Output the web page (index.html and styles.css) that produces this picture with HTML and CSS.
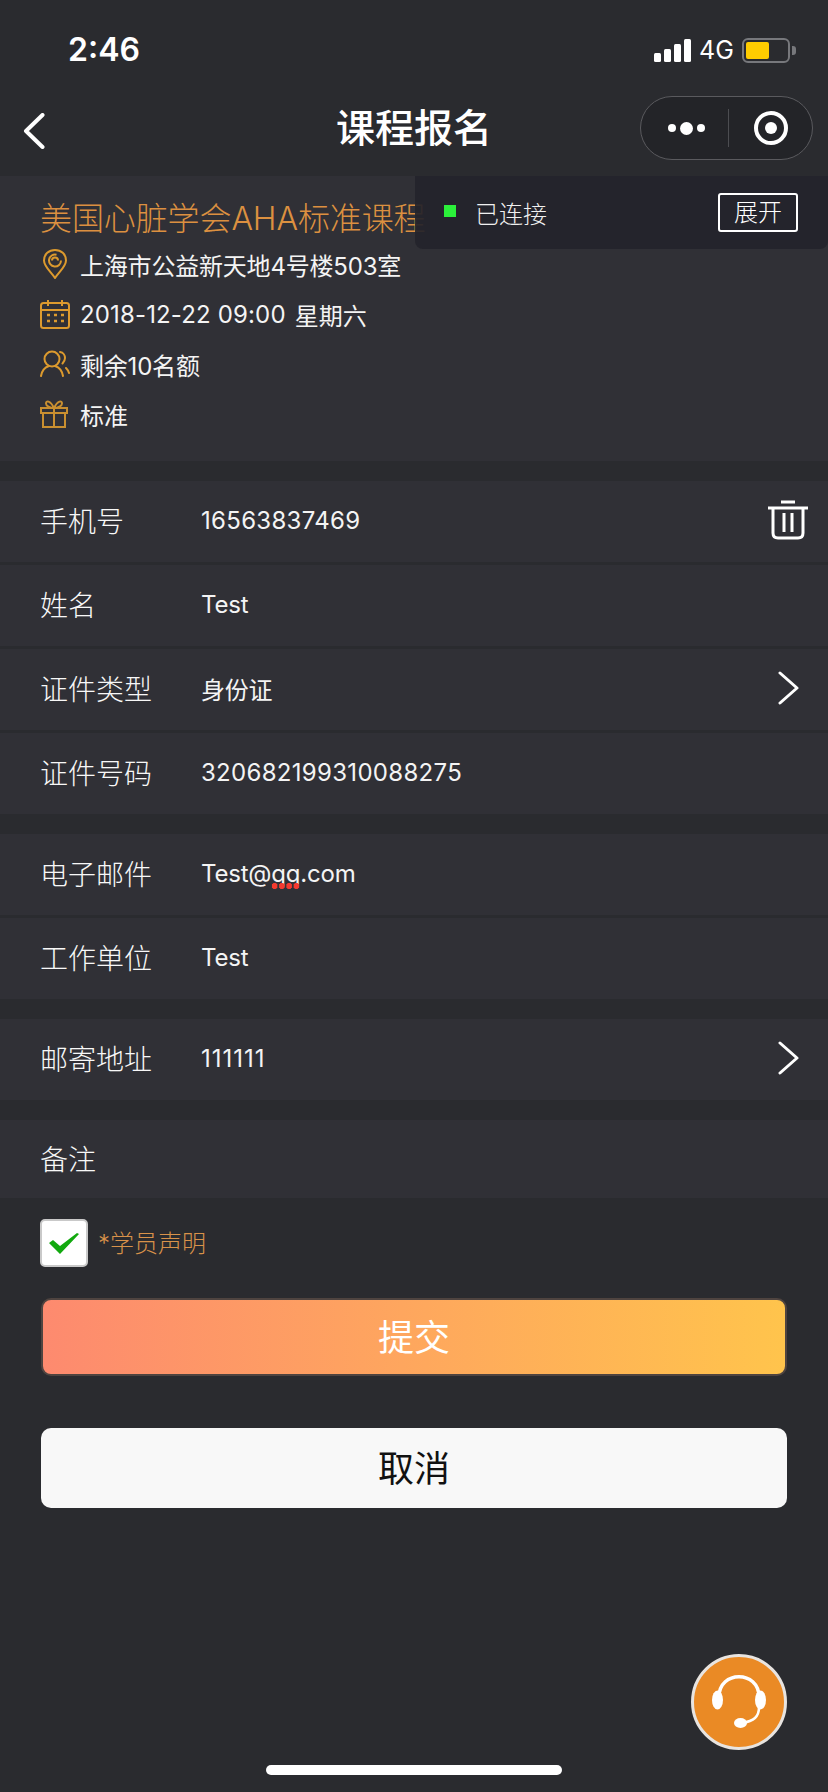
FILE: index.html
```html
<!DOCTYPE html>
<html lang="zh-CN">
<head>
    <meta charset="UTF-8">
    <meta name="viewport" content="width=device-width, initial-scale=1.0">
    <title>课程报名</title>
    <link rel="stylesheet" href="styles.css">
</head>
<body>
    <div class="page">
        <!-- Status bar -->
        <div class="status-bar">
            <span class="time">2:46</span>
            <div class="status-right">
                <div class="signal"><i class="b1"></i><i class="b2"></i><i class="b3"></i><i class="b4"></i></div>
                <span class="net">4G</span>
                <div class="battery"><div class="battery-fill"></div></div>
                <div class="battery-nub"></div>
            </div>
        </div>

        <!-- Nav -->
        <div class="nav">
            <svg class="back" viewBox="0 0 22 36" width="22" height="36"><path d="M19.500 2 L3 18 L19.500 34" fill="none" stroke="#fff" stroke-width="4" stroke-linecap="round" stroke-linejoin="round"/></svg>
            <h1 class="nav-title">课程报名</h1>
            <div class="capsule">
                <div class="capsule-dots"><i></i><i class="big"></i><i></i></div>
                <div class="capsule-line"></div>
                <svg class="capsule-target" viewBox="0 0 34 34" width="34" height="34"><circle cx="17" cy="17" r="15" fill="none" stroke="#fff" stroke-width="4"/><circle cx="17" cy="17" r="6" fill="#fff"/></svg>
            </div>
        </div>

        <!-- Course info -->
        <div class="course">
            <div class="course-title">美国心脏学会AHA标准课程</div>
            <div class="info-row">
                <svg class="info-icon" viewBox="0 0 30 30" width="30" height="30"><path d="M15 29 C11 23 4 17.500 4 11.500 C4 5 9 1 15 1 C21 1 26 5 26 11.500 C26 17.500 19 23 15 29 Z" fill="none" stroke="#dc9a2e" stroke-width="2"/><path d="M21 11.500 A6 6 0 1 1 16.500 5.700" fill="none" stroke="#dc9a2e" stroke-width="2"/><path d="M12 11.500 A3 3 0 0 1 18 11.500" fill="none" stroke="#dc9a2e" stroke-width="2"/></svg>
                <span class="tight">上海市公益新天地4号楼503室</span>
            </div>
            <div class="info-row">
                <svg class="info-icon" viewBox="0 0 30 30" width="30" height="30"><rect x="1" y="4" width="28" height="25" rx="2.500" fill="none" stroke="#dc9a2e" stroke-width="2"/><path d="M1 11 H29 M8 1 V7 M22 1 V7" fill="none" stroke="#dc9a2e" stroke-width="2"/><path d="M7 16 h3 M14 16 h3 M21 16 h3 M7 22 h3 M14 22 h3 M21 22 h3" stroke="#dc9a2e" stroke-width="2.500"/></svg>
                <span class="info-date">2018-12-22 09:00</span><span class="info-week">星期六</span>
            </div>
            <div class="info-row">
                <svg class="info-icon" viewBox="0 0 30 30" width="30" height="30"><circle cx="12" cy="10" r="7.500" fill="none" stroke="#dc9a2e" stroke-width="2"/><path d="M1 27 C2 21 6 18 9 17 M15 17 C18 18 22 21 23 27 M20 3 C23.500 3.500 25 6.500 25 9 C25 11 24 13 22.500 14.500 M26 19 C27.500 20.500 28.500 22 29 24" fill="none" stroke="#dc9a2e" stroke-width="2" stroke-linecap="round"/></svg>
                <span class="tight">剩余10名额</span>
            </div>
            <div class="info-row">
                <svg class="info-icon" viewBox="0 0 30 30" width="30" height="30"><path d="M1 9 H27 V14 H1 Z M3 14 V28 H25 V14 M14 9 V28" fill="none" stroke="#c98f30" stroke-width="2"/><path d="M14 9 C10 9 6 7 6 4.500 C6 1.500 10 1 14 9 C18 1 22 1.500 22 4.500 C22 7 18 9 14 9 Z" fill="none" stroke="#c98f30" stroke-width="2"/></svg>
                <span>标准</span>
            </div>
        </div>

        <!-- Form groups -->
        <div class="group">
            <div class="row"><span class="label">手机号</span><span class="value num">16563837469</span>
                <svg class="row-icon trash" viewBox="0 0 40 40" width="40" height="40"><path d="M13 2 H27 M0 8 H40" stroke="#fff" stroke-width="3"/><path d="M5 9 V33 Q5 38 10 38 H30 Q35 38 35 33 V9" fill="none" stroke="#fff" stroke-width="3"/><path d="M16 13 V32 M24 13 V32" stroke="#fff" stroke-width="3"/></svg>
            </div>
            <div class="row"><span class="label">姓名</span><span class="value">Test</span></div>
            <div class="row"><span class="label">证件类型</span><span class="value">身份证</span>
                <svg class="row-icon arrow" viewBox="0 0 22 34" width="22" height="34"><path d="M2 2 L19 17 L2 32" fill="none" stroke="#fff" stroke-width="3" stroke-linecap="round" stroke-linejoin="round"/></svg>
            </div>
            <div class="row"><span class="label">证件号码</span><span class="value num">320682199310088275</span></div>
        </div>

        <div class="group">
            <div class="row"><span class="label">电子邮件</span><span class="value">Test@<span class="typo">qq</span>.com</span></div>
            <div class="row"><span class="label">工作单位</span><span class="value">Test</span></div>
        </div>

        <div class="group">
            <div class="row"><span class="label">邮寄地址</span><span class="value ones">111111</span>
                <svg class="row-icon arrow" viewBox="0 0 22 34" width="22" height="34"><path d="M2 2 L19 17 L2 32" fill="none" stroke="#fff" stroke-width="3" stroke-linecap="round" stroke-linejoin="round"/></svg>
            </div>
        </div>

        <div class="group note">
            <div class="row"><span class="label">备注</span></div>
        </div>

        <div class="agree">
            <div class="checkbox">
                <svg viewBox="0 0 30 22" width="30" height="22"><path d="M0 11 L4 8 L11 14 L28 1 L30 2 L11 22 Z" fill="#12a90f"/></svg>
            </div>
            <span class="agree-text">*学员声明</span>
        </div>

        <button class="btn btn-submit">提交</button>
        <button class="btn btn-cancel">取消</button>

        <!-- Overlays -->
        <div class="conn">
            <i class="conn-dot"></i>
            <span class="conn-text">已连接</span>
            <span class="conn-btn">展开</span>
        </div>

        <div class="support">
            <svg viewBox="0 0 54 54" width="54" height="54"><path d="M7 22 C7 -5 47 -5 47 22" fill="none" stroke="#fff" stroke-width="3.500"/><ellipse cx="5.500" cy="25" rx="5.500" ry="9.500" fill="#fff"/><ellipse cx="48.500" cy="25" rx="5.500" ry="9.500" fill="#fff"/><path d="M47 32 C47 42 42 46 30 48" fill="none" stroke="#fff" stroke-width="2.500"/><ellipse cx="28.500" cy="48" rx="6.500" ry="5" fill="#fff"/></svg>
        </div>

        <div class="home-bar"></div>
    </div>
</body>
</html>
```

FILE: styles.css
```css
* {
    box-sizing: border-box;
}

body {
    margin: 0;
    background: #2a2b2f;
    font-family: 'Inter', 'Noto Sans CJK SC', sans-serif;
    color: #fff;
}

.page {
    position: relative;
    width: 828px;
    height: 1792px;
    overflow: hidden;
    background: #2a2b2f;
}

/* Status bar */
.status-bar {
    height: 96px;
    padding: 28px 32px 0 68px;
    display: flex;
    justify-content: space-between;
    align-items: flex-start;
}

.time {
    font-size: 32px;
    line-height: 44px;
    font-weight: 600;
}

.status-right {
    display: flex;
    align-items: center;
    height: 44px;
}

.signal {
    display: flex;
    align-items: flex-end;
    gap: 3px;
    height: 23px;
    margin-right: 8px;
}

.signal i {
    width: 7px;
    border-radius: 1.5px;
    background: #fff;
}

.signal .b1 { height: 9px; }
.signal .b2 { height: 13px; }
.signal .b3 { height: 18px; }
.signal .b4 { height: 23px; }

.net {
    font-size: 25px;
    margin-right: 8px;
    width: 35px;
}

.battery {
    width: 48px;
    height: 25px;
    border: 2px solid #77787c;
    border-radius: 6px;
    padding: 2px;
}

.battery-fill {
    width: 23px;
    height: 100%;
    background: #ffcc00;
    border-radius: 2px;
}

.battery-nub {
    width: 4px;
    height: 9px;
    margin-left: 2px;
    background: #77787c;
    border-radius: 0 3px 3px 0;
}

/* Nav */
.nav {
    height: 64px;
    margin-bottom: 16px;
    padding: 0 15px 0 23px;
    display: grid;
    grid-template-columns: 1fr auto 1fr;
    align-items: center;
}

.back {
    margin-top: 6px;
}

.nav-title {
    margin: 0;
    padding-right: 8px;
    font-size: 39px;
    line-height: 64px;
    font-weight: 500;
    white-space: nowrap;
}

.capsule {
    justify-self: end;
    width: 173px;
    height: 64px;
    border: 1px solid #5a5a5e;
    border-radius: 32px;
    background: #232428;
    display: flex;
    align-items: center;
    padding-left: 27px;
}

.capsule-dots {
    display: flex;
    align-items: center;
    gap: 4px;
    width: 38px;
}

.capsule-dots i {
    width: 8px;
    height: 8px;
    border-radius: 50%;
    background: #fff;
}

.capsule-dots .big {
    width: 13px;
    height: 13px;
}

.capsule-line {
    width: 1px;
    height: 38px;
    margin-left: 22px;
    background: #4c4d51;
}

.capsule-target {
    margin-left: 25px;
}

/* Course info */
.course {
    height: 285px;
    padding: 21px 0 0 40px;
    background: #303036;
    margin-bottom: 20px;
}

.course-title {
    font-size: 32px;
    line-height: 44px;
    font-weight: 300;
    color: #dc9040;
    white-space: nowrap;
    letter-spacing: -0.1px;
    margin-bottom: -2px;
}

.info-row {
    height: 50px;
    display: flex;
    align-items: center;
    font-size: 24px;
    color: #f4f4f4;
    white-space: nowrap;
}

.info-icon {
    flex-shrink: 0;
    margin-right: 10px;
}

.tight {
    letter-spacing: -0.2px;
}

.info-date {
    letter-spacing: 0.15px;
}

.info-week {
    margin-left: 9px;
}

/* Form */
.group {
    display: flex;
    flex-direction: column;
    gap: 3px;
    margin-bottom: 20px;
}

.group.note {
    margin-bottom: 21px;
}

.row {
    height: 81px;
    padding: 0 21px 3px 40px;
    display: flex;
    align-items: center;
    background: #303036;
}

.note .row {
    height: 78px;
}

.label {
    width: 161px;
    font-size: 28px;
    font-weight: 300;
    color: #f8f8f8;
    flex-shrink: 0;
}

.value {
    font-size: 24px;
    letter-spacing: -0.2px;
    color: #f4f4f4;
}

.value.num {
    letter-spacing: 0.3px;
}

.value.ones {
    letter-spacing: 1px;
}

.row-icon {
    margin-left: auto;
}

.trash {
    margin-right: -1px;
}

.arrow {
    margin-right: 7px;
}

.typo {
    position: relative;
}

.typo::after {
    content: "";
    position: absolute;
    left: 0;
    right: 0;
    bottom: -1px;
    height: 6px;
    background: radial-gradient(circle, #f43a30 2.800px, transparent 3.200px) 0 0 / 7.250px 6px repeat-x;
}

/* Agree */
.agree {
    display: flex;
    align-items: center;
    margin: 0 0 31px 40px;
}

.checkbox {
    width: 48px;
    height: 48px;
    background: #fff;
    border: 2px solid #c9c9c9;
    border-radius: 5px;
    display: flex;
    align-items: center;
    justify-content: center;
    margin-right: 10px;
}

.agree-text {
    font-size: 24px;
    font-weight: 300;
    padding-bottom: 3px;
    color: #d8924a;
}

/* Buttons */
.btn {
    display: block;
    width: 746px;
    margin-left: 41px;
    border: none;
    border-radius: 10px;
    font-family: inherit;
    font-size: 36px;
    padding: 0 0 4px;
}

.btn-submit {
    height: 78px;
    color: #fff;
    background: linear-gradient(90deg, #fd8a6f, #ffc44c);
    border: 2px solid #4f4440;
    margin-bottom: 52px;
}

.btn-cancel {
    height: 80px;
    color: #111;
    background: #f8f8f8;
}

/* Overlays */
.conn {
    position: absolute;
    left: 415px;
    top: 176px;
    width: 413px;
    height: 73px;
    padding: 0 30px 1px 29px;
    display: flex;
    align-items: center;
    background: rgba(35, 35, 43, 0.93);
    border-radius: 0 0 8px 8px;
}

.conn-dot {
    width: 12px;
    height: 12px;
    margin-top: -3px;
    background: #2bf03a;
}

.conn-text {
    margin-left: 19px;
    font-size: 24px;
    font-weight: 300;
    color: #f0f0f0;
}

.conn-btn {
    margin-left: auto;
    width: 80px;
    height: 39px;
    border: 2px solid #fff;
    border-radius: 3px;
    font-size: 24px;
    font-weight: 300;
    line-height: 35px;
    text-align: center;
}

.support {
    position: absolute;
    left: 691px;
    top: 1654px;
    width: 96px;
    height: 96px;
    border: 3px solid #e8e4e0;
    border-radius: 50%;
    background: #ea8a25;
    display: flex;
    align-items: center;
    justify-content: center;
}

.home-bar {
    position: absolute;
    left: 266px;
    top: 1765px;
    width: 296px;
    height: 10px;
    border-radius: 5px;
    background: #fff;
}
```
